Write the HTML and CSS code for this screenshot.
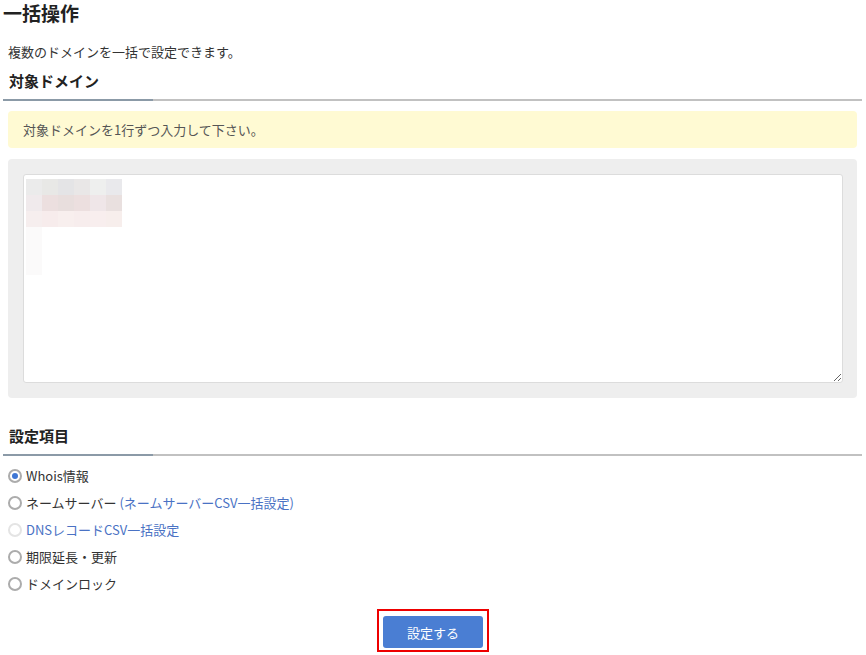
FILE: index.html
```html
<!DOCTYPE html>
<html lang="ja">
<head>
<meta charset="utf-8">
<title>一括操作</title>
<link rel="stylesheet" href="styles.css">
</head>
<body>
<div class="page">
  <h1 class="title">一括操作</h1>
  <p class="desc">複数のドメインを一括で設定できます。</p>
  <h2 class="section-head">対象ドメイン</h2>
  <div class="notice">対象ドメインを1行ずつ入力して下さい。</div>
  <div class="input-panel">
    <div class="area-wrap">
      <textarea class="domains"></textarea>
      <div class="redact">
        <div class="redact-grid">
          <span style="background:#ebebeb"></span><span style="background:#e8e8e6"></span><span style="background:#e4e4e6"></span><span style="background:#e9e7e7"></span><span style="background:#eeefee"></span><span style="background:#e9e9ec"></span>
          <span style="background:#f0eaec"></span><span style="background:#ecdfdf"></span><span style="background:#e8dedd"></span><span style="background:#ecdfdf"></span><span style="background:#efe6e8"></span><span style="background:#e9e0df"></span>
          <span style="background:#f6eeee"></span><span style="background:#f7ecec"></span><span style="background:#f8efee"></span><span style="background:#f7eded"></span><span style="background:#f8eeee"></span><span style="background:#f7eeec"></span>
        </div>
        <div class="redact-tail"></div>
      </div>
    </div>
  </div>
  <h2 class="section-head second">設定項目</h2>
  <ul class="options">
    <li><span class="radio checked"></span><span>Whois情報</span></li>
    <li><span class="radio"></span><span>ネームサーバー <a class="link">(ネームサーバーCSV一括設定)</a></span></li>
    <li class="disabled"><span class="radio"></span><a class="link">DNSレコードCSV一括設定</a></li>
    <li><span class="radio"></span><span>期限延長・更新</span></li>
    <li><span class="radio"></span><span>ドメインロック</span></li>
  </ul>
  <div class="actions">
    <div class="highlight"><button class="submit">設定する</button></div>
  </div>
</div>
</body>
</html>
```
FILE: styles.css
```css
* { box-sizing: border-box; }
html, body { margin: 0; padding: 0; background: #fff; }
body {
  font-family: "Noto Sans CJK JP", "Noto Sans", sans-serif;
  color: #333;
  font-size: 13px;
}
.page {
  width: 859px;
  margin-left: 3px;
}
.title {
  margin: 0;
  font-size: 19px;
  line-height: 26px;
  font-weight: 700;
  color: #222;
}
.desc {
  margin: 16px 0 0 5px;
  font-size: 13px;
  line-height: 20px;
}
.section-head {
  margin: 0;
  padding: 8px 0 7px 6px;
  font-size: 15px;
  line-height: 22px;
  font-weight: 700;
  color: #222;
  border-bottom: 2px solid #c1c1c1;
  position: relative;
}
.section-head::after {
  content: "";
  position: absolute;
  left: 0;
  bottom: -2px;
  width: 150px;
  height: 2px;
  background: #8b9aa7;
}
.notice {
  margin: 10px 5px 0 5px;
  height: 37px;
  padding: 0 15px;
  background: #fffad3;
  border-radius: 4px;
  color: #555;
  line-height: 37px;
  font-size: 13px;
}
.input-panel {
  margin: 11px 5px 0 5px;
  background: #eeeeee;
  border-radius: 4px;
  padding: 15px;
}
.area-wrap { position: relative; height: 209px; }
.domains {
  display: block;
  width: 820px;
  height: 209px;
  border: 1px solid #dcdcdc;
  border-radius: 3px;
  background: #fff;
  resize: vertical;
  font-family: inherit;
}
.redact {
  position: absolute;
  left: 3px;
  top: 5px;
}
.redact-grid {
  display: grid;
  grid-template-columns: repeat(6, 16px);
  grid-auto-rows: 16px;
}
.redact-grid span { display: block; }
.redact-tail {
  width: 16px;
  height: 48px;
  background: #fbfafa;
}
.section-head.second {
  margin-top: 19px;
}
.options {
  list-style: none;
  margin: 6px 0 0 0;
  padding: 0 0 0 5px;
}
.options li {
  display: flex;
  align-items: center;
  gap: 4px;
  height: 27px;
  font-size: 13px;
  color: #333;
}
.radio {
  width: 14px;
  height: 14px;
  border-radius: 50%;
  border: 2px solid #acacac;
  background: #fff;
  flex: none;
  position: relative;
}
.radio.checked::after {
  content: "";
  position: absolute;
  left: 50%;
  top: 50%;
  width: 6px;
  height: 6px;
  margin: -3px 0 0 -3px;
  border-radius: 50%;
  background: #3f77d5;
}
.disabled .radio { border-color: #e4e4e4; }
.link {
  color: #4a72c4;
  text-decoration: none;
}
.actions {
  display: flex;
  justify-content: center;
  margin-top: 12px;
  padding-left: 1px;
}
.highlight {
  border: 2px solid #ee0000;
  padding: 5px 4px 2px 4px;
}
.submit {
  display: block;
  width: 100px;
  height: 32px;
  border: 0;
  border-radius: 3px;
  background: #4a7ed3;
  color: #fff;
  font-family: inherit;
  font-size: 13px;
}
```
